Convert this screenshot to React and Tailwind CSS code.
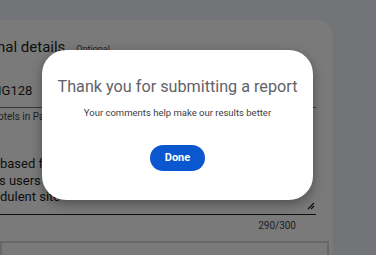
import React from 'react';

const App = () => {
    return (
        <div className="relative h-[255px] w-[376px] overflow-hidden bg-[#eef2f9] font-['Roboto',sans-serif]">

            {/* page behind the dialog */}
            <div className="pt-[20px] pr-[43px]">
                <div className="h-[260px] rounded-tr-[16px] bg-white pt-[17px]">
                    <div className="flex items-baseline gap-[11px] ml-[-3px]">
                        <h2 className="text-[15px] leading-[20px] text-[#1f1f1f]">nal details</h2>
                        <span className="text-[9px] text-[#444746]">Optional</span>
                    </div>

                    <div className="mr-[17px] mt-[26px] border-b border-[#747775] pb-[8px]">
                        <p className="text-[13px] leading-[16px] text-[#1f1f1f] ml-[-2px]">IG128</p>
                    </div>
                    <p className="mt-[3px] text-[10px] leading-[12px] text-[#444746] ml-[-2px]">otels in Pa</p>

                    <div className="relative mr-[17px] mt-[33px] border-b border-[#1f1f1f] pb-[8px]">
                        <p className="text-[13px] leading-[16.5px] text-[#1f1f1f]">based fa</p>
                        <p className="text-[13px] leading-[16.5px] text-[#1f1f1f] ml-[-1px]">s users to</p>
                        <p className="text-[13px] leading-[16.5px] text-[#1f1f1f]">dulent site</p>
                        <svg className="absolute right-[1px] bottom-[4px]" width="9" height="9" viewBox="0 0 9 9">
                            <path d="M8 2 L2 8 M8 5 L5 8" stroke="#1f1f1f" strokeWidth="1.2" />
                        </svg>
                    </div>
                    <p className="mr-[37px] mt-[5px] text-right text-[10px] leading-[12px] text-[#444746]">290/300</p>

                    <div className="mt-[9px] mr-[4px] h-[40px] border-2 border-[#d5d7d5]"></div>
                </div>
            </div>

            {/* scrim */}
            <div className="absolute inset-0 bg-black/[0.52]"></div>

            {/* dialog */}
            <div className="absolute left-[42px] top-[50px] flex h-[150px] w-[271px] flex-col items-center rounded-[24px] bg-white pt-[25px] shadow-[0_4px_12px_rgba(0,0,0,0.35)]">
                <h1 className="text-[16.2px] leading-[24px] text-[#5f6368]">Thank you for submitting a report</h1>
                <p className="mt-[7px] text-[9.5px] leading-[14px] text-[#3c4043]">Your comments help make our results better</p>
                <button className="mt-[25px] h-[26px] w-[55px] rounded-full bg-[#0b57d0] text-[11px] font-bold text-white">
                    Done
                </button>
            </div>
        </div>
    );
};

export default App;
